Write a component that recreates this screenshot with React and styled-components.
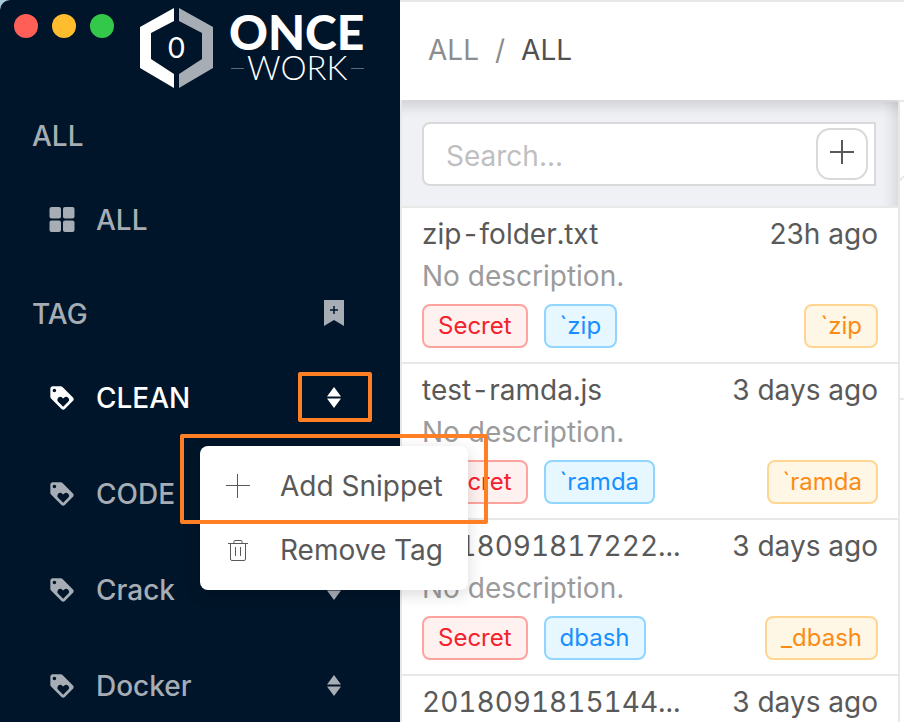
import React from "react";
import styled, { createGlobalStyle, css } from "styled-components";
import { MdLoyalty } from "react-icons/md";

const GlobalStyle = createGlobalStyle`
  *, *::before, *::after { box-sizing: border-box; }
  body {
    margin: 0;
    background: #a9c9dd;
    color: #595959;
    font-family: Inter, "Liberation Sans", sans-serif;
    font-size: 28px;
    line-height: 42px;
  }
  button, input { font: inherit; color: inherit; }
  ul { list-style: none; margin: 0; padding: 0; }
`;

const Window = styled.div`
  display: grid;
  grid-template-columns: 400px minmax(0, 1fr);
  height: 100vh;
  overflow: hidden;
  border-top-left-radius: 10px;
  background: #fff;
`;

const Sidebar = styled.nav`
  position: relative;
  z-index: 2;
  background: #001529;
  color: #a6adb4;
`;

const Brand = styled.div`
  display: flex;
  align-items: flex-start;
  height: 98px;
  padding: 8px 8px 0 14px;
`;

const Lights = styled.div`
  display: flex;
  gap: 14px;
  padding-top: 6px;
  margin-right: 26px;
`;

const Light = styled.button`
  width: 24px;
  height: 24px;
  padding: 0;
  border: 0;
  border-radius: 50%;
  background: ${(p) => p.$color};
`;

const GroupTitle = styled.h2`
  display: flex;
  align-items: center;
  justify-content: space-between;
  height: 76px;
  margin: 0 0 6px;
  padding: 0 54px 0 32px;
  font-size: 28px;
  font-weight: 500;
`;

const IconButton = styled.button`
  display: flex;
  padding: 0;
  border: 0;
  background: none;
`;

const NavList = styled.ul`
  display: flex;
  flex-direction: column;
  gap: 16px;
  padding-bottom: 16px;
`;

const NavItem = styled.li`
  position: relative;
  display: flex;
  align-items: center;
  height: 80px;
  padding: 0 28px 0 48px;
  color: ${(p) => (p.$active ? "#fff" : "inherit")};
`;

const NavLink = styled.a`
  display: flex;
  flex: 1;
  align-items: center;
  gap: 20px;
  color: inherit;
  font-weight: 500;
  text-decoration: none;
  svg { width: 28px; height: 28px; }
`;

const SortButton = styled.button`
  display: flex;
  align-items: center;
  justify-content: center;
  width: 74px;
  height: 50px;
  margin-bottom: 2px;
  padding: 2px 2px 0 0;
  border: 4px solid ${(p) => (p.$marked ? "#ff8024" : "transparent")};
  border-radius: 2px;
  background: none;
`;

const Menu = styled.ul`
  position: absolute;
  top: 88px;
  left: 200px;
  width: 268px;
  padding: 8px 0;
  border-radius: 8px;
  background: #fff;
  box-shadow: 0 4px 16px rgba(0, 0, 0, 0.15);
  z-index: 3;
`;

const MenuItem = styled.li`
  position: relative;
  ${(p) =>
    p.$marked &&
    css`
      &::after {
        content: "";
        position: absolute;
        inset: -20px -20px -6px;
        border: 4px solid #ff8024;
        border-radius: 2px;
        pointer-events: none;
      }
    `}
`;

const MenuButton = styled.button`
  display: flex;
  align-items: center;
  gap: 28px;
  width: 100%;
  height: 64px;
  padding: 0 24px;
  border: 0;
  background: none;
  color: #595959;
  white-space: nowrap;
  svg { flex: none; }
`;

const Content = styled.div`
  display: flex;
  flex-direction: column;
  min-width: 0;
`;

const Crumbs = styled.header`
  display: flex;
  align-items: center;
  gap: 16px;
  flex: none;
  height: 100px;
  padding: 0 28px 2px;
  border-top: 2px solid #e8e8e8;
  color: #8c8c8c;
  a { color: inherit; text-decoration: none; }
  strong { color: #505050; font-weight: 400; }
`;

const Panes = styled.div`
  display: grid;
  grid-template-columns: 500px minmax(0, 1fr);
  flex: 1;
  min-height: 0;
`;

const ListPane = styled.main`
  border: 2px solid #e8e8e8;
  border-width: 0 2px;
  overflow: hidden;
`;

const SearchBar = styled.form`
  padding: 22px 20px 20px;
  background: #f0f1f5;
  box-shadow:
    inset 0 2px 0 #d8d8da,
    inset 0 18px 14px -12px rgba(0, 0, 0, 0.14),
    inset -16px 0 14px -12px rgba(0, 0, 0, 0.12);
  border-bottom: 2px solid #e8e8e8;
`;

const SearchBox = styled.div`
  display: flex;
  align-items: center;
  height: 64px;
  padding-right: 6px;
  margin-right: 2px;
  border: 2px solid #d9d9d9;
  border-radius: 8px 0 0 8px;
  background: #fff;
`;

const SearchInput = styled.input`
  flex: 1;
  min-width: 0;
  padding: 4px 22px 0;
  border: 0;
  outline: 0;
  background: none;
  &::placeholder { color: #bfbfbf; opacity: 1; }
`;

const AddButton = styled.button`
  display: flex;
  align-items: center;
  justify-content: center;
  width: 52px;
  height: 52px;
  padding: 0 0 2px;
  border: 2px solid #d9d9d9;
  border-radius: 14px;
  background: #fff;
`;

const Snippet = styled.li`
  padding: 5px 20px 14px;
  border-bottom: 2px solid #e8e8e8;
`;

const Line = styled.div`
  display: flex;
  justify-content: space-between;
  gap: 16px;
  white-space: nowrap;
`;

const Name = styled.span`
  font-variant-numeric: tabular-nums;
`;

const Description = styled.div`
  color: #9b9b9b;
`;

const Tags = styled.div`
  display: flex;
  gap: 16px;
  margin-top: 7px;
`;

const tones = {
  red: ["#f5222d", "#fff1f0", "#ffa39e"],
  blue: ["#1890ff", "#e6f7ff", "#91d5ff"],
  orange: ["#fa8c16", "#fff7e6", "#ffd591"],
};

const Tag = styled.span`
  height: 44px;
  padding: 0 14px;
  border: 2px solid ${(p) => tones[p.$tone][2]};
  border-radius: 8px;
  background: ${(p) => tones[p.$tone][1]};
  color: ${(p) => tones[p.$tone][0]};
  font-size: 24px;
  line-height: 40px;
  margin-left: ${(p) => (p.$end ? "auto" : "0")};
`;

const DetailPane = styled.aside`
  overflow: hidden;
  border-top: 2px solid #e8e8e8;
`;

const DetailHead = styled.div`
  height: 298px;
  padding-top: 72px;
  border-bottom: 2px solid #e8e8e8;
  svg { display: block; }
`;

const Logo = () => (
  <svg width="232" height="84" viewBox="0 0 232 84" role="img" aria-label="Once Work">
    <path d="M34 0V13L11 25V51L34 66V80L0 60V19Z" fill="#fff" />
    <path d="M39 0V13L62 25V51L39 66V80L73 60V19Z" fill="#a6adb4" />
    <text x="36.5" y="50" textAnchor="middle" fontFamily="Lato" fontSize="29" fill="#fff">0</text>
    <text x="89" y="42" fontFamily="Lato" fontWeight="900" fontSize="48" fill="#fff">ONCE</text>
    <text x="107" y="72" fontFamily="Lato" fontWeight="300" fontSize="33" fill="#fff">WORK</text>
    <path d="M91 60.500H104M211 60.500H224" stroke="#5c6a77" />
  </svg>
);

const GridIcon = () => (
  <svg viewBox="0 0 28 28" fill="currentColor">
    <rect x="1.500" y="1" width="11.500" height="11.500" rx="2" />
    <rect x="15" y="1" width="11.500" height="11.500" rx="2" />
    <rect x="1.500" y="14.500" width="11.500" height="11.500" rx="2" />
    <rect x="15" y="14.500" width="11.500" height="11.500" rx="2" />
  </svg>
);

const BookmarkIcon = () => (
  <svg width="24" height="28" viewBox="0 0 24 28">
    <path d="M2 0H22V26L12 20L2 26Z" fill="#a6adb4" />
    <path d="M8 10H16M12 6V14" stroke="#001529" strokeWidth="1.500" />
  </svg>
);

const SortIcon = () => (
  <svg width="16" height="22" viewBox="0 0 16 22" fill="currentColor">
    <path d="M8 0L15 9.500H1ZM8 21L1 11.500H15Z" />
  </svg>
);

const PlusIcon = ({ weight }) => (
  <svg width="28" height="28" viewBox="0 0 28 28" fill="none" stroke="currentColor" strokeWidth={weight}>
    {weight === 1 ? <path d="M2 13.500H26M13.500 2V26" /> : <path d="M2 13H26M14 1V25" />}
  </svg>
);

const TrashIcon = () => (
  <svg width="28" height="28" viewBox="0 0 28 28" fill="none" stroke="currentColor">
    <path d="M4 7.500H24M10 7V5.500Q10 4.500 11 4.500H17Q18 4.500 18 5.500V7M6.500 8V23Q6.500 24.500 8 24.500H20Q21.500 24.500 21.500 23V8M11.500 11V20M16.500 11V20" />
  </svg>
);

const tagNames = ["CLEAN", "CODE", "Crack", "Docker"];

const snippets = [
  { name: "zip-folder.txt", age: "23h ago", tag: "`zip", label: "`zip" },
  { name: "test-ramda.js", age: "3 days ago", tag: "`ramda", label: "`ramda" },
  { name: "2018091817222...", age: "3 days ago", tag: "dbash", label: "_dbash" },
  { name: "2018091815144...", age: "3 days ago", tag: "dbash", label: "_dbash" },
];

export default function App() {
  return (
    <>
      <GlobalStyle />
      <Window>
        <Sidebar>
          <Brand>
            <Lights>
              <Light $color="#ff5f57" aria-label="Close" />
              <Light $color="#ffbd2e" aria-label="Minimize" />
              <Light $color="#34c84a" aria-label="Zoom" />
            </Lights>
            <Logo />
          </Brand>
          <GroupTitle>ALL</GroupTitle>
          <NavList>
            <NavItem>
              <NavLink href="#all"><GridIcon />ALL</NavLink>
            </NavItem>
          </NavList>
          <GroupTitle>
            TAG
            <IconButton aria-label="New tag"><BookmarkIcon /></IconButton>
          </GroupTitle>
          <NavList>
            {tagNames.map((name, i) => (
              <NavItem key={name} $active={i === 0}>
                <NavLink href={"#" + name}><MdLoyalty />{name}</NavLink>
                <SortButton $marked={i === 0} aria-label={name + " actions"}><SortIcon /></SortButton>
                {i === 0 && (
                  <Menu>
                    <MenuItem $marked>
                      <MenuButton><PlusIcon weight={1} />Add Snippet</MenuButton>
                    </MenuItem>
                    <MenuItem>
                      <MenuButton><TrashIcon />Remove Tag</MenuButton>
                    </MenuItem>
                  </Menu>
                )}
              </NavItem>
            ))}
          </NavList>
        </Sidebar>
        <Content>
          <Crumbs>
            <a href="#all">ALL</a>
            <span>/</span>
            <strong>ALL</strong>
          </Crumbs>
          <Panes>
            <ListPane>
              <SearchBar>
                <SearchBox>
                  <SearchInput type="text" placeholder="Search..." aria-label="Search" />
                  <AddButton type="button" aria-label="Add snippet"><PlusIcon weight={2} /></AddButton>
                </SearchBox>
              </SearchBar>
              <ul>
                {snippets.map((s) => (
                  <Snippet key={s.name}>
                    <Line><Name>{s.name}</Name><time>{s.age}</time></Line>
                    <Description>No description.</Description>
                    <Tags>
                      <Tag $tone="red">Secret</Tag>
                      <Tag $tone="blue">{s.tag}</Tag>
                      <Tag $tone="orange" $end>{s.label}</Tag>
                    </Tags>
                  </Snippet>
                ))}
              </ul>
            </ListPane>
            <DetailPane>
              <DetailHead>
                <svg width="12" height="12" viewBox="0 0 12 12" fill="none" stroke="#e8e8e8" strokeWidth="2">
                  <path d="M0 7Q2 1 12 1" />
                </svg>
              </DetailHead>
            </DetailPane>
          </Panes>
        </Content>
      </Window>
    </>
  );
}
